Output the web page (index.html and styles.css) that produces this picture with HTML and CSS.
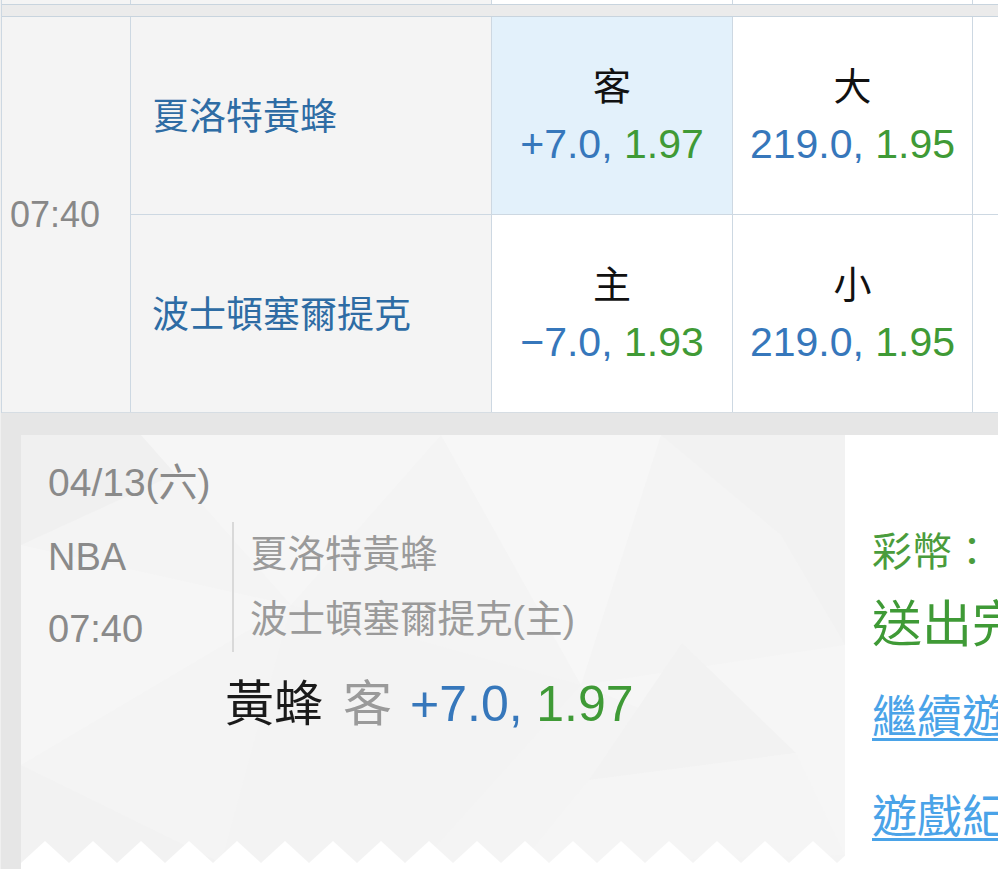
FILE: index.html
```html
<!DOCTYPE html>
<html lang="zh-Hant">
<head>
<meta charset="utf-8">
<title>投注單</title>
<link rel="stylesheet" href="styles.css">
</head>
<body>
<div class="board">
  <div class="prev">
    <div class="cell gray"></div>
    <div class="cell gray"></div>
    <div class="cell"></div>
    <div class="cell"></div>
    <div class="cell"></div>
  </div>
  <div class="sep"></div>
  <div class="match">
    <div class="time">07:40</div>
    <div class="team">夏洛特黃蜂</div>
    <div class="odd sel"><span class="lbl">客</span><span class="val"><span class="line">+7.0,</span> <span class="price">1.97</span></span></div>
    <div class="odd"><span class="lbl">大</span><span class="val"><span class="line">219.0,</span> <span class="price">1.95</span></span></div>
    <div class="odd"></div>
    <div class="team">波士頓塞爾提克</div>
    <div class="odd"><span class="lbl">主</span><span class="val"><span class="line">−7.0,</span> <span class="price">1.93</span></span></div>
    <div class="odd"><span class="lbl">小</span><span class="val"><span class="line">219.0,</span> <span class="price">1.95</span></span></div>
    <div class="odd"></div>
  </div>
</div>

<div class="lower">
  <div class="ticket">
    <svg class="ticket-bg" width="824" height="428" viewBox="0 0 824 428" aria-hidden="true">
      <rect width="824" height="428" fill="#f4f4f4"/>
      <polygon points="0,0 240,0 0,110" fill="#f0f0f0"/>
      <polygon points="120,0 420,0 270,170" fill="#f6f6f6"/>
      <polygon points="420,0 640,0 560,250" fill="#f7f7f7"/>
      <polygon points="640,0 824,0 824,210 760,100" fill="#f2f2f2"/>
      <polygon points="0,110 270,170 0,330" fill="#f6f6f6"/>
      <polygon points="270,170 560,250 400,428 200,428" fill="#f3f3f3"/>
      <polygon points="560,250 824,210 824,420 760,330" fill="#f6f6f6"/>
      <polygon points="0,330 200,428 0,428" fill="#f2f2f2"/>
      <polygon points="661,208 568,345 775,318" fill="#f2f2f2"/>
      <polygon points="568,345 775,318 824,420 500,428" fill="#f5f5f5"/>
    </svg>
    <div class="date">04/13(六)</div>
    <div class="info">
      <div class="meta">
        <div>NBA</div>
        <div>07:40</div>
      </div>
      <div class="teams">
        <div>夏洛特黃蜂</div>
        <div>波士頓塞爾提克(主)</div>
      </div>
    </div>
    <div class="pick"><span class="pick-team">黃蜂</span><span class="pick-side">客</span><span class="line">+7.0,</span> <span class="price">1.97</span></div>
    <svg class="zigzag" width="824" height="22" viewBox="0 0 824 22" aria-hidden="true">
      <defs>
        <pattern id="zz" width="48" height="22" patternUnits="userSpaceOnUse">
          <polygon points="0,22 24,0 48,22" fill="#ffffff"/>
        </pattern>
      </defs>
      <rect width="824" height="22" fill="url(#zz)"/>
    </svg>
  </div>
  <div class="result">
    <div class="coins">彩幣：</div>
    <div class="done">送出完成</div>
    <a class="link first" href="#">繼續遊戲</a>
    <a class="link" href="#">遊戲紀錄</a>
  </div>
</div>
</body>
</html>
```

FILE: styles.css
```css
html, body {
  margin: 0;
  padding: 0;
}

body {
  width: 998px;
  height: 869px;
  overflow: hidden;
  background: #f0f0f0;
  font-family: "Liberation Sans", "Noto Sans CJK TC", sans-serif;
}

.board {
  margin-left: 1px;
  border-left: 1px solid #cdd8e2;
}

.prev {
  display: grid;
  grid-template-columns: 128px 360px 240px 239px 1fr;
  column-gap: 1px;
  height: 4px;
  background: #cdd8e2;
}

.cell {
  background: #fff;
}

.cell.gray {
  background: #f4f4f4;
}

.sep {
  height: 11px;
  background: #ebebeb;
  border-top: 1px solid #c8d4de;
  border-bottom: 1px solid #c8d4de;
}

.match {
  display: grid;
  grid-template-columns: 128px 360px 240px 239px 1fr;
  grid-template-rows: 197px 197px;
  gap: 1px;
  background: #cdd8e2;
  border-bottom: 1px solid #d6dde3;
}

.time {
  grid-row: span 2;
  background: #f4f4f4;
  color: #888;
  font-size: 36px;
  line-height: 44px;
  display: flex;
  align-items: center;
  padding-left: 8px;
}

.team {
  background: #f4f4f4;
  color: #2e6ca4;
  font-size: 37px;
  line-height: 48px;
  display: flex;
  align-items: center;
  padding-left: 21px;
  padding-top: 4px;
}

.odd {
  background: #fff;
  display: flex;
  flex-direction: column;
  align-items: center;
  justify-content: center;
  gap: 7px;
}

.odd.sel {
  background: #e3f1fb;
}

.lbl {
  color: #111;
  font-size: 38px;
  line-height: 50px;
}

.val {
  font-size: 41px;
  line-height: 50px;
  white-space: nowrap;
}

.line {
  color: #3677bb;
}

.price {
  color: #3f9a36;
}

.lower {
  margin-left: 1px;
  border-left: 20px solid #e6e6e6;
  border-top: 22px solid #e6e6e6;
  background: #fff;
  height: 460px;
  display: flex;
  align-items: flex-start;
}

.ticket {
  position: relative;
  width: 824px;
  height: 428px;
  flex: none;
  display: flex;
  flex-direction: column;
  padding-left: 27px;
  box-sizing: border-box;
}

.ticket-bg {
  position: absolute;
  left: 0;
  top: 0;
  z-index: 0;
}

.date, .info, .pick, .zigzag {
  position: relative;
  z-index: 1;
}

.date {
  margin-top: 26px;
  color: #8a8a8a;
  font-size: 39px;
  line-height: 44px;
}

.info {
  margin-top: 17px;
  display: flex;
  align-items: flex-start;
}

.meta {
  width: 184px;
  color: #8a8a8a;
  font-size: 38px;
  line-height: 72px;
  margin-top: -1px;
}

.teams {
  border-left: 2px solid #d9d9d9;
  padding-left: 16px;
  color: #9a9a9a;
  font-size: 37.5px;
  line-height: 65px;
  white-space: nowrap;
}

.pick {
  margin-top: 9px;
  padding-left: 177px;
  font-size: 49px;
  line-height: 60px;
  white-space: nowrap;
}

.pick-team {
  color: #1a1a1a;
}

.pick-side {
  color: #9a9a9a;
  margin-left: 20px;
  margin-right: 18px;
}

.pick .line, .pick .price {
  font-size: 50px;
}

.zigzag {
  margin-top: auto;
  margin-left: -27px;
  display: block;
}

.result {
  flex: 1;
  padding-left: 27px;
  padding-top: 92px;
  display: flex;
  flex-direction: column;
  align-items: flex-start;
  white-space: nowrap;
}

.coins {
  color: #4a9c3c;
  font-size: 40px;
  line-height: 50px;
}

.done {
  margin-top: 13px;
  color: #3f9a36;
  font-size: 50px;
  line-height: 70px;
}

.link {
  margin-top: 40px;
  color: #4aa3e8;
  font-size: 45px;
  line-height: 60px;
  text-decoration: underline;
  text-decoration-thickness: 3px;
  text-underline-offset: 5px;
}

.link.first {
  margin-top: 28px;
}
```
